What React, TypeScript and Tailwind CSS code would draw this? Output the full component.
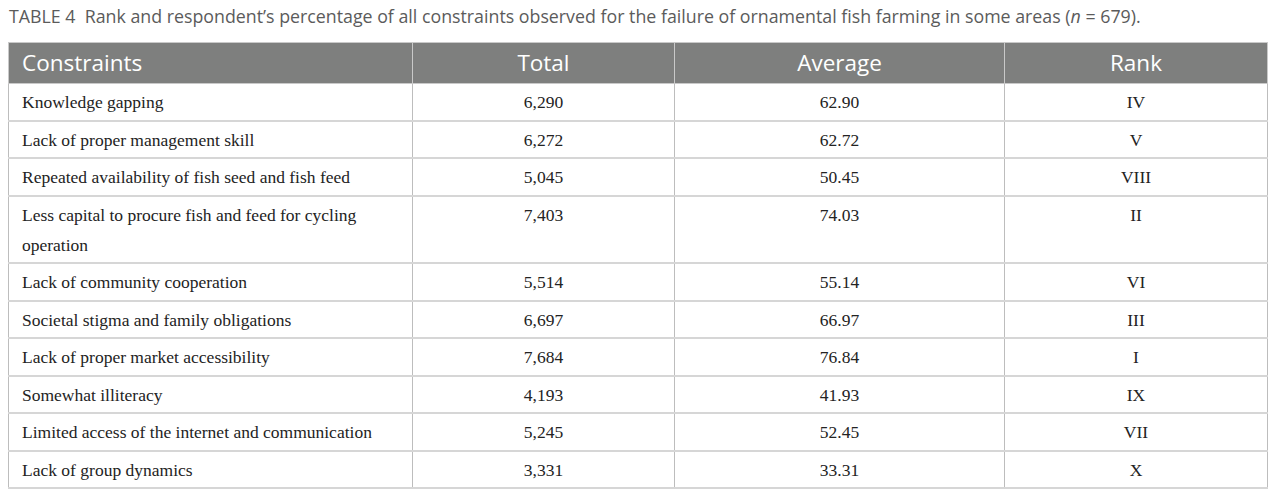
const rows: [string, string, string, string][] = [
  ['Knowledge gapping', '6,290', '62.90', 'IV'],
  ['Lack of proper management skill', '6,272', '62.72', 'V'],
  ['Repeated availability of fish seed and fish feed', '5,045', '50.45', 'VIII'],
  ['Less capital to procure fish and feed for cycling operation', '7,403', '74.03', 'II'],
  ['Lack of community cooperation', '5,514', '55.14', 'VI'],
  ['Societal stigma and family obligations', '6,697', '66.97', 'III'],
  ['Lack of proper market accessibility', '7,684', '76.84', 'I'],
  ['Somewhat illiteracy', '4,193', '41.93', 'IX'],
  ['Limited access of the internet and communication', '5,245', '52.45', 'VII'],
  ['Lack of group dynamics', '3,331', '33.31', 'X'],
];

const App = () => {
  return (
    <div className="w-[1280px] h-[496px] bg-white px-[8px] pt-[4px] overflow-hidden">
      <p className="font-['Open_Sans',sans-serif] text-[17.8px] leading-[24px] text-[#5b5b5b] pl-[1px] whitespace-nowrap">
        TABLE 4&nbsp;&nbsp;Rank and respondent’s percentage of all constraints observed for the failure of ornamental fish
        farming in some areas (<i>n</i> = 679).
      </p>
      <table className="mt-[14px] w-[1259px] border-collapse table-fixed">
        <colgroup>
          <col className="w-[404px]" />
          <col className="w-[262px]" />
          <col className="w-[330px]" />
          <col className="w-[263px]" />
        </colgroup>
        <thead>
          <tr className="bg-[#7e7f7e] text-white font-['Open_Sans',sans-serif] text-[22.5px]">
            <th className="h-[41px] px-[13px] text-left font-normal border border-[#c9c9c9]">Constraints</th>
            <th className="font-normal border border-[#c9c9c9]">Total</th>
            <th className="font-normal border border-[#c9c9c9]">Average</th>
            <th className="font-normal border border-[#c9c9c9]">Rank</th>
          </tr>
        </thead>
        <tbody className="font-['Liberation_Serif',serif] text-[17.5px] leading-[30px] text-[#232323]">
          {rows.map(([name, total, avg, rank]) => (
            <tr key={name}>
              <td className="px-[13px] pt-[3px] pb-[2.5px] align-top border-x border-[#bdbdbd] border-b-2 border-b-[#d6d6d6]">{name}</td>
              <td className="pt-[3px] pb-[2.5px] align-top text-center border-x border-[#bdbdbd] border-b-2 border-b-[#d6d6d6]">{total}</td>
              <td className="pt-[3px] pb-[2.5px] align-top text-center border-x border-[#bdbdbd] border-b-2 border-b-[#d6d6d6]">{avg}</td>
              <td className="pt-[3px] pb-[2.5px] align-top text-center border-x border-[#bdbdbd] border-b-2 border-b-[#d6d6d6]">{rank}</td>
            </tr>
          ))}
        </tbody>
      </table>
    </div>
  );
};

export default App;
